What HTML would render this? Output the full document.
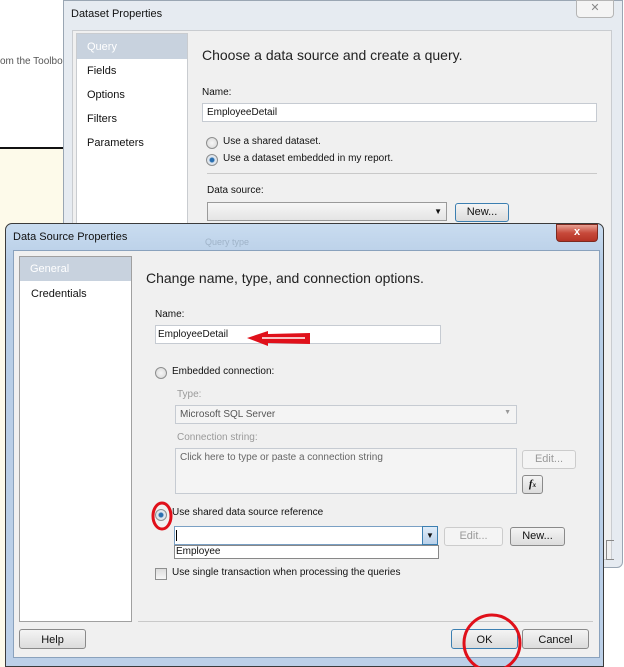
<!DOCTYPE html>
<html><head><meta charset="utf-8"><style>
*{margin:0;padding:0;box-sizing:border-box}
body{width:624px;height:667px;position:relative;overflow:hidden;background:#fff;font-family:"Liberation Sans",sans-serif;font-size:11px;color:#111}
.a{position:absolute}
.btn{position:absolute;border:1px solid #8a8a8a;border-radius:3px;background:linear-gradient(#f4f4f4,#dcdcdc);text-align:center;font-size:11px;line-height:20px}
.inp{position:absolute;background:#fff;border:1px solid #c6cbd2}
.radio{position:absolute;width:12px;height:12px;border-radius:50%;border:1px solid #8e8f8f;background:radial-gradient(#f6f6f6,#d6d6d6)}
.dis{color:#9a9a9a}
</style></head><body>
<div class="a" style="left:0;top:148px;width:70px;height:519px;background:#fdfaea"></div>
<div class="a" style="left:0;top:147px;width:66px;height:2px;background:#111"></div>
<div class="a" style="left:0;top:56px;font-size:10px;color:#555">om the Toolbo</div>
<div class="a" style="left:352px;top:0;width:5px;height:24px;background:#a9c3dd"></div>
<div class="a" style="left:63px;top:0;width:560px;height:568px;background:#e6ebf1;border:1px solid #9aa6b3;border-radius:0 0 6px 6px"></div>
<div class="a" style="left:71px;top:8px;font-size:11px">Dataset Properties</div>
<div class="a" style="left:576px;top:0;width:38px;height:18px;border:1px solid #b5b5b5;border-radius:0 0 4px 4px;background:#f4f4f4;text-align:center;color:#888;font-size:11px">&#x2715;</div>
<div class="a" style="left:72px;top:30px;width:540px;height:530px;background:#f0f0f0;border:1px solid #c9ccd0"></div>
<div class="a" style="left:76px;top:33px;width:112px;height:500px;background:#fff;border:1px solid #c9ccd0"></div>
<div class="a" style="left:77px;top:34px;width:110px;height:25px;background:#c8d2de;color:#fff;padding:7px 0 0 10px">Query</div>
<div class="a" style="left:87px;top:65px">Fields</div>
<div class="a" style="left:87px;top:89px">Options</div>
<div class="a" style="left:87px;top:113px">Filters</div>
<div class="a" style="left:87px;top:137px">Parameters</div>
<div class="a" style="left:202px;top:47px;font-size:14px;color:#222">Choose a data source and create a query.</div>
<div class="a" style="left:202px;top:87px;font-size:10px">Name:</div>
<div class="inp" style="left:202px;top:103px;width:395px;height:19px;padding:3px 4px;font-size:10px">EmployeeDetail</div>
<div class="radio" style="left:206px;top:137px"></div>
<div class="a" style="left:223px;top:136px;font-size:10px">Use a shared dataset.</div>
<div class="radio" style="left:206px;top:154px;background:radial-gradient(#2a6fb0 2px,#dfe6ee 3px)"></div>
<div class="a" style="left:223px;top:153px;font-size:10px">Use a dataset embedded in my report.</div>
<div class="a" style="left:207px;top:173px;width:390px;height:1px;background:#c9c9c9"></div>
<div class="a" style="left:207px;top:185px;font-size:10px">Data source:</div>
<div class="inp" style="left:207px;top:202px;width:240px;height:19px;background:linear-gradient(#f7f7f7,#e4e4e4);border-color:#9a9a9a;text-align:right;padding-right:4px;font-size:8px;line-height:17px">&#9660;</div>
<div class="btn" style="left:455px;top:203px;width:54px;height:19px;line-height:17px;border-color:#3c7fb1">New...</div>
<div class="a" style="left:606px;top:540px;width:8px;height:20px;border:1px solid #888;border-right:none"></div>
<div class="a" style="left:5px;top:223px;width:599px;height:444px;background:linear-gradient(#c9dcf0,#b7cde6 40px,#bcd0e8);border:1px solid #3b3b3b;border-radius:7px 7px 0 0"></div>
<div class="a" style="left:13px;top:231px;font-size:11px">Data Source Properties</div>
<div class="a" style="left:205px;top:237px;font-size:9px;color:#9fb3c8">Query type</div>
<div class="a" style="left:556px;top:224px;width:42px;height:18px;background:linear-gradient(#e8a093,#c7493a 50%,#b53325);border:1px solid #7d2a20;border-radius:0 0 4px 4px;color:#fff;text-align:center;font-weight:bold;font-size:11px;line-height:15px">x</div>
<div class="a" style="left:13px;top:250px;width:587px;height:408px;background:#f0f0f0;border:1px solid #8aa2bd"></div>
<div class="a" style="left:19px;top:256px;width:113px;height:366px;background:#fff;border:1px solid #a0a0a0"></div>
<div class="a" style="left:20px;top:257px;width:111px;height:24px;background:#c8d2de;color:#fff;padding:6px 0 0 10px">General</div>
<div class="a" style="left:31px;top:288px">Credentials</div>
<div class="a" style="left:146px;top:270px;font-size:14px;color:#222">Change name, type, and connection options.</div>
<div class="a" style="left:155px;top:309px;font-size:10px">Name:</div>
<div class="inp" style="left:155px;top:325px;width:286px;height:19px;padding:3px 2px;font-size:10px">EmployeeDetail</div>
<div class="radio" style="left:155px;top:367px"></div>
<div class="a" style="left:172px;top:366px;font-size:10px">Embedded connection:</div>
<div class="a dis" style="left:177px;top:389px;font-size:10px">Type:</div>
<div class="inp dis" style="left:175px;top:405px;width:342px;height:19px;background:#f4f4f4;padding:3px 4px;font-size:10px;color:#555">Microsoft SQL Server<span style="position:absolute;right:5px;top:3px;font-size:7px;color:#999">&#9660;</span></div>
<div class="a dis" style="left:177px;top:432px;font-size:10px">Connection string:</div>
<div class="inp" style="left:175px;top:448px;width:342px;height:46px;background:#f4f4f4;padding:3px 4px;font-size:10px;color:#666">Click here to type or paste a connection string</div>
<div class="btn dis" style="left:522px;top:450px;width:54px;height:19px;line-height:17px;border-color:#ccc;background:#f4f4f4">Edit...</div>
<div class="btn" style="left:522px;top:475px;width:21px;height:19px;line-height:17px;font-style:italic;font-family:'Liberation Serif',serif;font-weight:bold">f<span style="font-size:7px">x</span></div>
<div class="radio" style="left:155px;top:509px;background:radial-gradient(#2a6fb0 2px,#dfe6ee 3px)"></div>
<div class="a" style="left:172px;top:507px;font-size:10px">Use shared data source reference</div>
<div class="inp" style="left:174px;top:526px;width:253px;height:19px;border-color:#7aa0c4"><div class="a" style="left:1px;top:3px;width:1px;height:11px;background:#000"></div></div>
<div class="a" style="left:422px;top:526px;width:16px;height:19px;background:linear-gradient(#e0ecf8,#b9d1ea);border:1px solid #3c7fb1;text-align:center;font-size:8px;line-height:17px">&#9660;</div>
<div class="a" style="left:174px;top:545px;width:265px;height:14px;background:#fff;border:1px solid #888;padding-left:1px;font-size:10px">Employee</div>
<div class="btn dis" style="left:444px;top:527px;width:59px;height:19px;line-height:17px;border-color:#ccc;background:#f4f4f4">Edit...</div>
<div class="btn" style="left:510px;top:527px;width:55px;height:19px;line-height:17px">New...</div>
<div class="a" style="left:155px;top:568px;width:12px;height:12px;border:1px solid #8e8f8f;background:linear-gradient(#ddd,#f6f6f6)"></div>
<div class="a" style="left:172px;top:567px;font-size:10px">Use single transaction when processing the queries</div>
<div class="a" style="left:138px;top:621px;width:455px;height:1px;background:#c9c9c9"></div>
<div class="btn" style="left:19px;top:629px;width:67px;height:20px">Help</div>
<div class="btn" style="left:451px;top:629px;width:67px;height:20px;border-color:#3c7fb1">OK</div>
<div class="btn" style="left:522px;top:629px;width:67px;height:20px">Cancel</div>
<svg class="a" style="left:0;top:0" width="624" height="667">
<path d="M247 338 L268 331 L268 334 L310 333 L310 344 L268 343 L268 346 Z" fill="#e0101a"/>
<path d="M262 338 L305 338" stroke="#fff" stroke-width="1.5"/>
<ellipse cx="162" cy="516" rx="9" ry="13" fill="none" stroke="#e0101a" stroke-width="3"/>
<ellipse cx="492" cy="643" rx="28" ry="28" fill="none" stroke="#e0101a" stroke-width="3"/>
</svg>
</body></html>
